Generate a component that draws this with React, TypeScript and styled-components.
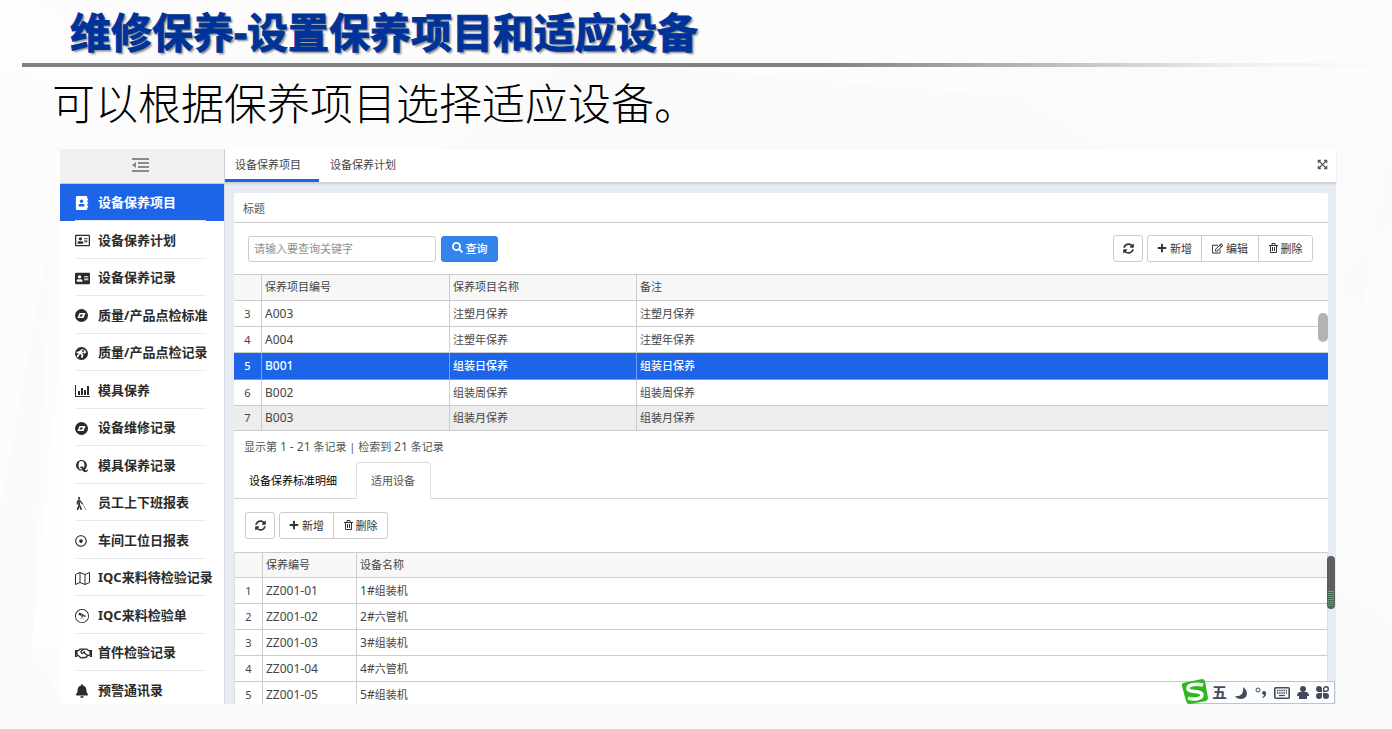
import React from 'react';
import styled, { createGlobalStyle, css } from 'styled-components';
import {
  FaAddressBook,
  FaAddressCard,
  FaRegAddressCard,
  FaQuora,
  FaBlind,
  FaRegDotCircle,
  FaWpexplorer,
  FaRegHandshake,
  FaBell,
  FaExpandArrowsAlt,
  FaSyncAlt,
  FaPlus,
  FaRegEdit,
  FaSearch,
} from 'react-icons/fa';

const sans = '"Noto Sans", "Noto Sans CJK SC", sans-serif';

const GlobalStyle = createGlobalStyle`
  *, *::before, *::after { box-sizing: border-box; }
  body { margin: 0; background: #fcfcfc; font-family: ${sans}; color: #333; }
  button, input { font-family: inherit; margin: 0; }
`;

const Slide = styled.div`
  position: relative;
  display: flex;
  flex-direction: column;
  height: 100vh;
  overflow: hidden;
  padding-bottom: 25px;
`;

const Backdrop = styled.svg`
  position: absolute;
  inset: 0;
  width: 100%;
  height: 100%;
  z-index: -1;
`;

const Title = styled.h1`
  margin: 0;
  padding-left: 70px;
  height: 63px;
  line-height: 64px;
  font-size: 41px;
  font-weight: 700;
  color: #003399;
  -webkit-text-stroke: 1px #003399;
  text-shadow: 2px 2px 2px rgba(0, 0, 0, 0.45);
  white-space: nowrap;
`;

const Rule = styled.div`
  flex: none;
  height: 4px;
  margin-left: 22px;
  background: linear-gradient(to right, #808080 58%, #c0c0c0 76%, #f0f0f0 89%, rgba(252, 252, 252, 0) 100%);
`;

const Subtitle = styled.p`
  flex: none;
  margin: 0;
  padding-left: 52px;
  height: 82px;
  line-height: 68px;
  font-family: "Noto Sans CJK SC Light", "Noto Sans CJK SC", sans-serif;
  font-size: 43px;
  font-weight: 300;
  color: #000;
  white-space: nowrap;
`;

const AppFrame = styled.div`
  position: relative;
  flex: 1;
  min-height: 0;
  display: flex;
  margin: 0 56px 0 60px;
  background: #fff;
`;

const Sidebar = styled.aside`
  flex: none;
  width: 165px;
  border-right: 1px solid #d5d9df;
  overflow: hidden;
`;

const Collapse = styled.button`
  display: flex;
  align-items: center;
  justify-content: center;
  width: 100%;
  height: 35px;
  padding: 0 4px 2px 0;
  border: 0;
  border-bottom: 1px solid #ccc;
  background: #f0f0f0;
  color: #8a8a8a;
`;

const NavList = styled.ul`
  margin: 0;
  padding: 0;
  list-style: none;
`;

const NavItem = styled.li<{ $active?: boolean }>`
  height: 37px;
  padding-left: 15px;
  &:nth-child(even) { height: 38px; }
  ${(p) => p.$active && css`
    background: #1c65e9;
    a { color: #fff; }
  `}
`;

const NavLink = styled.a`
  display: flex;
  align-items: center;
  width: 131px;
  height: 100%;
  padding-bottom: 1px;
  border-bottom: 1px solid #e8eaf0;
  color: #2b2b2b;
  font-size: 13px;
  font-weight: 700;
  text-decoration: none;
  white-space: nowrap;
`;

const NavIcon = styled.span`
  flex: none;
  display: flex;
  width: 23px;
  padding-top: 3px;
  font-size: 13px;
`;

const Main = styled.main`
  flex: 1;
  min-width: 0;
  display: flex;
  flex-direction: column;
  background: #e6ebf4;
`;

const PageTabs = styled.div`
  flex: none;
  display: flex;
  height: 34px;
  background: #fff;
  border-bottom: 1px solid #cdcfd3;
  box-shadow: 0 1px 2px rgba(0, 0, 0, 0.12);
`;

const PageTab = styled.button<{ $active?: boolean }>`
  padding: 0 18px 0 10px;
  border: 0;
  border-bottom: 3px solid ${(p) => (p.$active ? '#1469e0' : 'transparent')};
  background: none;
  color: #444;
  font-size: 11px;
  white-space: nowrap;
`;

const TabGap = styled.span`
  width: 1px;
`;

const ExpandButton = styled.button`
  margin-left: auto;
  padding: 0 8px 2px;
  border: 0;
  background: none;
  color: #555;
  font-size: 11px;
  line-height: 1;
  display: flex;
  align-items: center;
`;

const Panel = styled.section`
  flex: 1;
  min-height: 0;
  overflow: hidden;
  margin: 10px 8px 0 9px;
  background: #fff;
  border-radius: 3px 3px 0 0;
`;

const PanelTitle = styled.h2`
  margin: 0;
  padding-left: 9px;
  height: 30px;
  line-height: 32px;
  border-bottom: 1px solid #ccc;
  color: #555;
  font-size: 11px;
  font-weight: 400;
`;

const Toolbar = styled.div<{ $lower?: boolean }>`
  display: flex;
  align-items: center;
  height: ${(p) => (p.$lower ? 53 : 51)}px;
  padding: ${(p) => (p.$lower ? '0 11px' : '0 15px 0 14px')};
  gap: 4px;
`;

const SearchForm = styled.form`
  display: flex;
  gap: 5px;
  margin-right: auto;
`;

const SearchInput = styled.input`
  width: 188px;
  height: 26px;
  padding: 0 5px;
  border: 1px solid #ccc;
  border-radius: 3px;
  background: #fff;
  color: #333;
  font-size: 11px;
  &::placeholder { color: #8f8f8f; opacity: 1; }
`;

const SearchButton = styled.button`
  display: flex;
  align-items: center;
  justify-content: center;
  gap: 3px;
  width: 57px;
  height: 26px;
  padding: 0 0 2px;
  border: 1px solid #2f7fe6;
  border-radius: 3px;
  background: #3385ee;
  color: #fff;
  font-size: 11px;
  font-weight: 500;
`;

const ButtonGroup = styled.div`
  display: flex;
`;

const ToolButton = styled.button<{ $width?: number }>`
  display: flex;
  align-items: center;
  justify-content: center;
  gap: 3px;
  width: ${(p) => p.$width ?? 55}px;
  height: 27px;
  padding: 0 0 1px;
  border: 1px solid #ccc;
  background: #fff;
  color: #333;
  font-size: 11px;
  white-space: nowrap;
  &:first-child { border-top-left-radius: 3px; border-bottom-left-radius: 3px; }
  &:last-child { border-top-right-radius: 3px; border-bottom-right-radius: 3px; }
  & + & { margin-left: -1px; }
`;

const GridArea = styled.div`
  position: relative;
`;

const Table = styled.table<{ $inset?: boolean }>`
  width: 100%;
  table-layout: fixed;
  border-collapse: separate;
  border-spacing: 0;
  border-top: 1px solid #ccc;
  border-left: ${(p) => (p.$inset ? '1px solid #ddd' : '0')};
  border-right: ${(p) => (p.$inset ? '1px solid #ddd' : '0')};
  font-size: 11px;
  color: #444;
`;

const Col = styled.col<{ $width?: number }>`
  width: ${(p) => (p.$width ? `${p.$width}px` : 'auto')};
`;

const HeadCell = styled.th<{ $height: number }>`
  height: ${(p) => p.$height}px;
  padding: 0 3px 1px;
  border-bottom: 1px solid #ccc;
  border-right: 1px solid #ccc;
  background: #f7f7f7;
  font-weight: 400;
  line-height: 16px;
  text-align: left;
  &:last-child { border-right: 0; }
`;

const Cell = styled.td`
  height: 26px;
  padding: 0 3px;
  border-bottom: 1px solid #ccc;
  border-right: 1px solid #ccc;
  line-height: 16px;
  white-space: nowrap;
  &:first-child { text-align: center; padding: 0; }
  &:last-child { border-right: 0; }
`;

const Row = styled.tr<{ $state?: 'selected' | 'hover' }>`
  ${(p) => p.$state === 'selected' && css`
    color: #fff;
    font-weight: 500;
    ${Cell} { background: #1c65e9; border-bottom-color: #5aa2f2; height: 27px; }
    ${Cell}:not(:last-child) { border-right-color: #6fa0f2; }
  `}
  ${(p) => p.$state === 'hover' && css`
    ${Cell} { background: #ededed; height: 25px; }
  `}
`;

const Num = styled.span`
  font-size: 12px;
`;

const Thumb = styled.div`
  position: absolute;
  top: 39px;
  right: 0;
  width: 10px;
  height: 29px;
  border-radius: 5px;
  background: #b3b3b3;
`;

const RecordInfo = styled.p`
  margin: 0;
  padding: 6px 10px 0;
  height: 31px;
  line-height: 20px;
  font-size: 11px;
  color: #555;
`;

const DetailTabs = styled.div`
  display: flex;
  height: 37px;
  border-bottom: 1px solid #d3d3d3;
`;

const DetailTab = styled.button<{ $active?: boolean }>`
  height: 37px;
  padding: 0 15px 2px 14px;
  border: 1px solid transparent;
  background: none;
  color: #000;
  font-size: 11px;
  white-space: nowrap;
  &:first-child { padding-right: 18px; }
  ${(p) => p.$active && css`
    border-color: #ddd #ddd #fff;
    border-radius: 4px 4px 0 0;
    background: #fff;
    color: #555;
  `}
`;

const PageThumb = styled.div`
  position: absolute;
  top: 407px;
  right: 1px;
  width: 8px;
  height: 53px;
  padding: 35px 1px 2px;
  border-radius: 4px;
  background: #5c5e60;
`;

const Stripes = styled.div`
  height: 100%;
  border-radius: 0 0 3px 3px;
  background: repeating-linear-gradient(#4fae6a 0 1px, #3f6b4d 1px 2px);
`;

const ImeBar = styled.div`
  position: absolute;
  right: 1px;
  bottom: 0;
  display: flex;
  align-items: center;
  width: 148px;
  height: 23px;
  padding: 0 5px 0 24px;
  justify-content: space-between;
  border: 1px solid #b4c5d4;
  background: #fbfdff;
  color: #434a5c;
  font-size: 15px;
  font-weight: 700;
  line-height: 18px;
`;

const ImeMode = styled.span`
  height: 20px;
`;

const ImeLogo = styled.svg`
  position: absolute;
  left: -7px;
  bottom: -1px;
`;

const OutdentIcon = () => (
  <svg width="17" height="14" viewBox="0 0 17 14" fill="currentColor" aria-hidden="true">
    <path d="M0 0h17v2H0zM6 4h11v2H6zM6 8h11v2H6zM0 12h17v2H0zM4 4v6L0 7z" />
  </svg>
);

const BarChartIcon = () => (
  <svg width="15" height="12" viewBox="0 0 15 12" fill="currentColor" aria-hidden="true">
    <path d="M0 0h1v11h14v1H0zM3 6h2v4H3zM6 3h2v7H6zM9 5h2v5H9zM12 1h2v9h-2z" />
  </svg>
);

const CompassIcon = () => (
  <svg width="13" height="13" viewBox="0 0 26 26" aria-hidden="true">
    <circle cx="13" cy="13" r="13" fill="currentColor" />
    <path d="M9 8h12l-4 10H5z" fill="#fff" />
    <path d="M11 11h5l-2 4H9z" fill="currentColor" />
  </svg>
);

const PropellerIcon = () => (
  <svg width="13" height="13" viewBox="0 0 26 26" aria-hidden="true">
    <circle cx="13" cy="13" r="13" fill="currentColor" />
    <path d="M10 7l4-3 7 3 1 4-3 3-2-3-3 1 3 4-2 6-3-1 1-5-3-2-4 7-3-2 5-7-4 1-1-3 6-2z" fill="#fff" />
    <circle cx="16" cy="8" r="2" fill="currentColor" />
  </svg>
);

const MapIcon = () => (
  <svg width="15" height="13" viewBox="0 0 15 13" fill="none" stroke="currentColor" aria-hidden="true">
    <path d="M0.5 2.500L5 0.500l5 2 4.500-2v10l-4.500 2-5-2-4.500 2zM5 0.500v10M10 2.500v10" />
  </svg>
);

const TrashIcon = () => (
  <svg width="9" height="10" viewBox="0 0 9 10" fill="none" stroke="currentColor" aria-hidden="true">
    <path d="M0 2.500h9M3 2V0.500h3V2M1.500 2.500v7h6v-7M3.500 4v4M5.500 4v4" />
  </svg>
);

const MoonIcon = () => (
  <svg width="14" height="14" viewBox="0 0 14 14" fill="currentColor" aria-hidden="true">
    <path d="M9 1c6 4 5 12-2 12-3 0-5-1-6-3 6 1 9-3 8-9z" />
  </svg>
);

const PunctuationIcon = () => (
  <svg width="12" height="12" viewBox="0 0 12 12" aria-hidden="true">
    <circle cx="3" cy="3" r="2" fill="none" stroke="currentColor" strokeWidth="1" />
    <path d="M9 4c3 0 3 5-1 7l-1-1c1 0 2-1 2-2-3-1-2-4 0-4z" fill="currentColor" />
  </svg>
);

const KeyboardIcon = () => (
  <svg width="16" height="12" viewBox="0 0 16 12" aria-hidden="true">
    <rect x="0.8" y="0.8" width="14.4" height="10.4" rx="1" fill="none" stroke="currentColor" strokeWidth="1.6" />
    <path d="M3 3.5h10M3 6h10" stroke="currentColor" strokeWidth="1.4" strokeDasharray="1.4 0.8" />
    <path d="M5 8.5h6" stroke="currentColor" strokeWidth="1.2" />
  </svg>
);

const PersonIcon = () => (
  <svg width="12" height="13" viewBox="0 0 12 13" fill="currentColor" aria-hidden="true">
    <circle cx="6" cy="3" r="3" />
    <path d="M3 6h6c2 0 3 2 3 4h-2v3H2v-3H0c0-2 1-4 3-4z" />
  </svg>
);

const CloverIcon = () => (
  <svg width="13" height="13" viewBox="0 0 13 13" fill="currentColor" aria-hidden="true">
    <path d="M3 0a3 3 0 0 1 3 3v3H3a3 3 0 0 1 0-6zM3 7h3v3a3 3 0 1 1-3-3zM7 7h3a3 3 0 1 1-3 3z" />
    <path d="M7.7 5.3V3a2.3 2.3 0 1 1 2.3 2.3z" fill="none" stroke="currentColor" strokeWidth="1.4" />
  </svg>
);

const navItems = [
  { label: '设备保养项目', icon: <FaAddressBook size={14} /> },
  { label: '设备保养计划', icon: <FaRegAddressCard size={15} /> },
  { label: '设备保养记录', icon: <FaAddressCard size={15} /> },
  { label: '质量/产品点检标准', icon: <CompassIcon /> },
  { label: '质量/产品点检记录', icon: <PropellerIcon /> },
  { label: '模具保养', icon: <BarChartIcon /> },
  { label: '设备维修记录', icon: <CompassIcon /> },
  { label: '模具保养记录', icon: <FaQuora size={14} /> },
  { label: '员工上下班报表', icon: <FaBlind /> },
  { label: '车间工位日报表', icon: <FaRegDotCircle size={12} /> },
  { label: 'IQC来料待检验记录', icon: <MapIcon /> },
  { label: 'IQC来料检验单', icon: <FaWpexplorer size={14} /> },
  { label: '首件检验记录', icon: <FaRegHandshake size={17} /> },
  { label: '预警通讯录', icon: <FaBell size={14} /> },
];

const projects = [
  { no: 3, code: 'A003', name: '注塑月保养' },
  { no: 4, code: 'A004', name: '注塑年保养' },
  { no: 5, code: 'B001', name: '组装日保养', state: 'selected' as const },
  { no: 6, code: 'B002', name: '组装周保养' },
  { no: 7, code: 'B003', name: '组装月保养', state: 'hover' as const },
];

const devices = [
  { no: 1, code: 'ZZ001-01', name: '组装机' },
  { no: 2, code: 'ZZ001-02', name: '六管机' },
  { no: 3, code: 'ZZ001-03', name: '组装机' },
  { no: 4, code: 'ZZ001-04', name: '六管机' },
  { no: 5, code: 'ZZ001-05', name: '组装机' },
];

export default function App() {
  return (
    <Slide>
      <GlobalStyle />
      <Backdrop viewBox="0 0 1392 729" preserveAspectRatio="none" aria-hidden="true">
        <path d="M0 0h40l120 85L0 75z" fill="#fdfdfd" />
        <path d="M570 60L1018 97L1190 200V729H400V180z" fill="#fafafa" />
        <path d="M968 0h190L1392 140V300L1190 200L1018 97z" fill="#fbfbfb" />
        <path d="M50 240L0 510V729h1392V620l-56-30V700H60l-28-52z" fill="#fafafa" />
        <path d="M60 350L32 648l28-3z" fill="#fefefe" />
        <path d="M1336 290l26 14 30-164v80z" fill="#fafafa" />
      </Backdrop>
      <Title>维修保养-设置保养项目和适应设备</Title>
      <Rule />
      <Subtitle>可以根据保养项目选择适应设备。</Subtitle>
      <AppFrame>
        <Sidebar>
          <Collapse type="button" aria-label="收起菜单"><OutdentIcon /></Collapse>
          <NavList>
            {navItems.map((item, i) => (
              <NavItem key={item.label} $active={i === 0}>
                <NavLink href="#">
                  <NavIcon>{item.icon}</NavIcon>
                  {item.label}
                </NavLink>
              </NavItem>
            ))}
          </NavList>
        </Sidebar>
        <Main>
          <PageTabs>
            <PageTab type="button" $active>设备保养项目</PageTab>
            <TabGap />
            <PageTab type="button">设备保养计划</PageTab>
            <ExpandButton type="button" aria-label="全屏"><FaExpandArrowsAlt /></ExpandButton>
          </PageTabs>
          <Panel>
            <PanelTitle>标题</PanelTitle>
            <Toolbar>
              <SearchForm>
                <SearchInput type="text" aria-label="关键字" placeholder="请输入要查询关键字" />
                <SearchButton type="button"><FaSearch />查询</SearchButton>
              </SearchForm>
              <ButtonGroup>
                <ToolButton type="button" $width={30} aria-label="刷新"><FaSyncAlt /></ToolButton>
              </ButtonGroup>
              <ButtonGroup>
                <ToolButton type="button"><FaPlus size={10} />新增</ToolButton>
                <ToolButton type="button" $width={58}><FaRegEdit />编辑</ToolButton>
                <ToolButton type="button"><TrashIcon />删除</ToolButton>
              </ButtonGroup>
            </Toolbar>
            <GridArea>
              <Table>
                <colgroup>
                  <Col $width={28} />
                  <Col $width={188} />
                  <Col $width={187} />
                  <Col />
                </colgroup>
                <thead>
                  <tr>
                    <HeadCell $height={26} />
                    <HeadCell $height={26}>保养项目编号</HeadCell>
                    <HeadCell $height={26}>保养项目名称</HeadCell>
                    <HeadCell $height={26}>备注</HeadCell>
                  </tr>
                </thead>
                <tbody>
                  {projects.map((row) => (
                    <Row key={row.code} $state={row.state}>
                      <Cell>{row.no}</Cell>
                      <Cell><Num>{row.code}</Num></Cell>
                      <Cell>{row.name}</Cell>
                      <Cell>{row.name}</Cell>
                    </Row>
                  ))}
                </tbody>
              </Table>
              <Thumb />
            </GridArea>
            <RecordInfo>
              显示第 <Num>1 - 21</Num> 条记录 | 检索到 <Num>21</Num> 条记录
            </RecordInfo>
            <DetailTabs>
              <DetailTab type="button">设备保养标准明细</DetailTab>
              <DetailTab type="button" $active>适用设备</DetailTab>
            </DetailTabs>
            <Toolbar $lower>
              <ButtonGroup>
                <ToolButton type="button" $width={30} aria-label="刷新"><FaSyncAlt /></ToolButton>
              </ButtonGroup>
              <ButtonGroup>
                <ToolButton type="button"><FaPlus size={10} />新增</ToolButton>
                <ToolButton type="button"><TrashIcon />删除</ToolButton>
              </ButtonGroup>
            </Toolbar>
            <Table $inset>
              <colgroup>
                <Col $width={28} />
                <Col $width={94} />
                <Col />
              </colgroup>
              <thead>
                <tr>
                  <HeadCell $height={25} />
                  <HeadCell $height={25}>保养编号</HeadCell>
                  <HeadCell $height={25}>设备名称</HeadCell>
                </tr>
              </thead>
              <tbody>
                {devices.map((row) => (
                  <Row key={row.code}>
                    <Cell>{row.no}</Cell>
                    <Cell><Num>{row.code}</Num></Cell>
                    <Cell><Num>{row.no}#</Num>{row.name}</Cell>
                  </Row>
                ))}
              </tbody>
            </Table>
          </Panel>
        </Main>
        <PageThumb><Stripes /></PageThumb>
        <ImeBar>
          <ImeLogo width="28" height="26" viewBox="0 0 28 26" aria-hidden="true">
            <path d="M2 5L21 1q2 0 3 2l3 17q0 2-2 3L9 26q-3 0-4-3L1 8q-1-2 1-3z" fill="#2fb81c" />
            <path d="M22 7C14 5 6 7 7 11c1 4 14 1 14 6 0 4-9 5-14 3" fill="none" stroke="#fff" strokeWidth="3.5" />
          </ImeLogo>
          <ImeMode>五</ImeMode>
          <MoonIcon />
          <PunctuationIcon />
          <KeyboardIcon />
          <PersonIcon />
          <CloverIcon />
        </ImeBar>
      </AppFrame>
    </Slide>
  );
}
